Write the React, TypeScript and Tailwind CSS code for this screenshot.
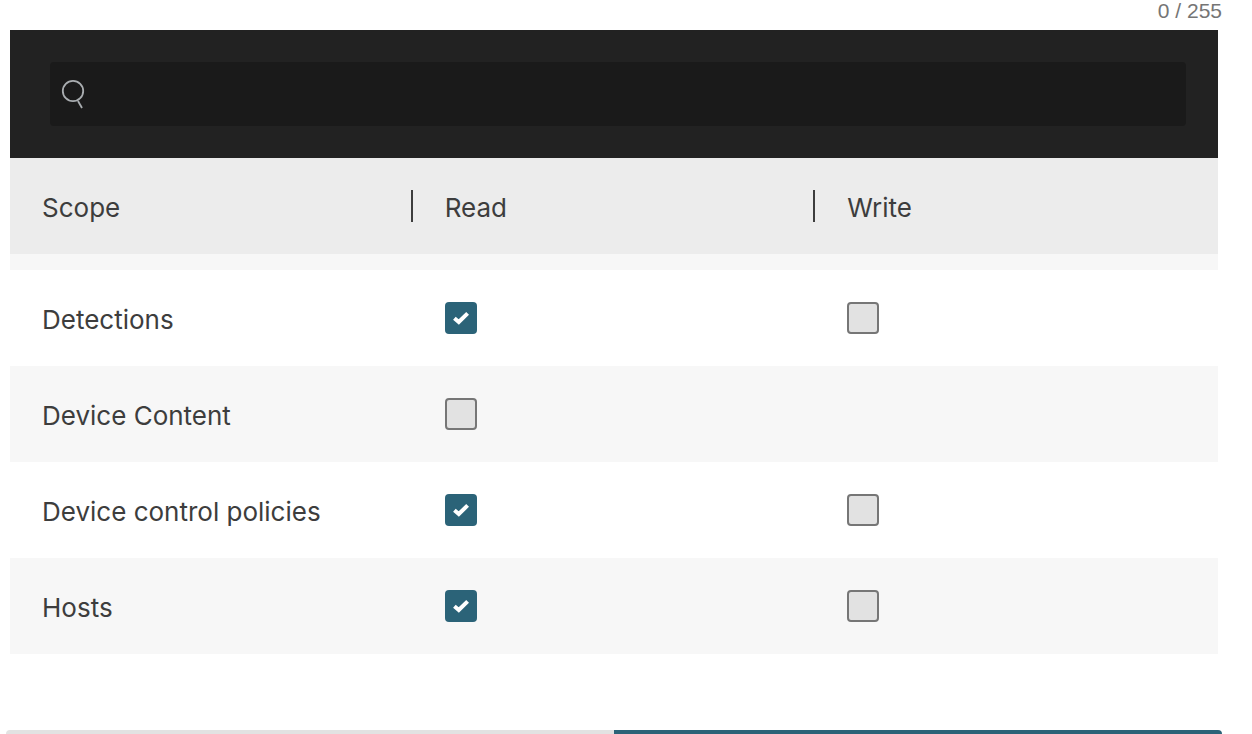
function Check({ on }: { on: boolean }) {
  if (on) {
    return (
      <div className="w-8 h-8 rounded-[4px] bg-[#2b6378] flex items-center justify-center">
        <svg width="16" height="14" viewBox="0 0 16 14" fill="none">
          <path d="M1.4 7.2 L5.8 11 L14.6 2.4" stroke="#ffffff" strokeWidth="4" />
        </svg>
      </div>
    );
  }
  return <div className="w-8 h-8 rounded-[4px] bg-[#e2e2e2] border-2 border-[#767676]" />;
}

const rows: { name: string; read: boolean; write: boolean | null; alt: boolean }[] = [
  { name: "Detections", read: true, write: false, alt: false },
  { name: "Device Content", read: false, write: null, alt: true },
  { name: "Device control policies", read: true, write: false, alt: false },
  { name: "Hosts", read: true, write: false, alt: true },
];

export default function App() {
  return (
    <div className="h-[734px] w-[1252px] overflow-hidden bg-white font-['Inter',sans-serif] flex flex-col pl-[6px] pr-[30px]">
      <div className="h-[30px] shrink-0 flex justify-end text-[21px] leading-[21px] text-[#757575] font-['Liberation_Sans',sans-serif]">
        0 / 255
      </div>
      <div className="mx-[4px] flex flex-col">
        <div className="h-[128px] bg-[#222222] pl-[40px] pr-[32px] py-[32px]">
          <div className="h-16 bg-[#1a1a1a] rounded-[4px] flex items-center pl-[11px]">
            <svg width="24" height="30" viewBox="0 0 24 30" fill="none" className="-mt-[1px]">
              <circle cx="12" cy="12" r="10.2" stroke="#a9adb0" strokeWidth="1.8" />
              <path d="M17 22 L21 29" stroke="#a9adb0" strokeWidth="1.8" />
            </svg>
          </div>
        </div>
        <div className="h-[96px] bg-[#ececec] grid grid-cols-3 text-[26px] text-[#3d3d3d]">
          <div className="flex items-center pl-[32px] pt-[2px]">Scope</div>
          <div className="relative flex items-center pl-[32px] pt-[2px]">
            <span className="absolute -left-[2px] top-[32px] h-[32px] w-[2px] bg-[#3d3d3d]" />
            Read
          </div>
          <div className="relative flex items-center pl-[32px] pt-[2px]">
            <span className="absolute -left-[2px] top-[32px] h-[32px] w-[2px] bg-[#3d3d3d]" />
            Write
          </div>
        </div>
        <div className="h-[16px] bg-[#f7f7f7]" />
        {rows.map((r) => (
          <div
            key={r.name}
            className={`h-[96px] grid grid-cols-3 items-center text-[26px] text-[#3d3d3d] ${r.alt ? "bg-[#f7f7f7]" : "bg-white"}`}
          >
            <div className="pl-[32px] pt-[2px]">{r.name}</div>
            <div className="pl-[32px]">
              <Check on={r.read} />
            </div>
            <div className="pl-[32px]">{r.write !== null && <Check on={r.write} />}</div>
          </div>
        ))}
      </div>
      <div className="mt-[76px] h-[40px] shrink-0 grid grid-cols-2 rounded-[4px] overflow-hidden">
        <div className="bg-[#e2e2e2]" />
        <div className="bg-[#2b6378]" />
      </div>
    </div>
  );
}
